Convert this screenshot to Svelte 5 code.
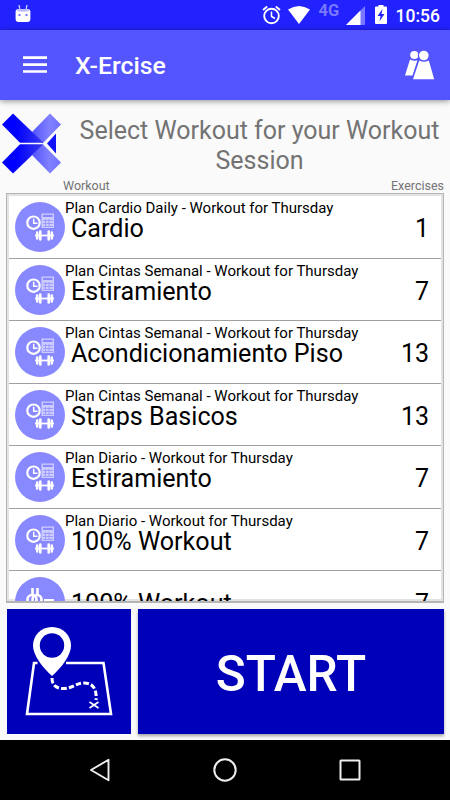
<script>
  let workouts = $state([
    { plan: 'Plan Cardio Daily - Workout for Thursday', name: 'Cardio', exercises: 1 },
    { plan: 'Plan Cintas Semanal - Workout for Thursday', name: 'Estiramiento', exercises: 7 },
    { plan: 'Plan Cintas Semanal - Workout for Thursday', name: 'Acondicionamiento Piso', exercises: 13 },
    { plan: 'Plan Cintas Semanal - Workout for Thursday', name: 'Straps Basicos', exercises: 13 },
    { plan: 'Plan Diario - Workout for Thursday', name: 'Estiramiento', exercises: 7 },
    { plan: 'Plan Diario - Workout for Thursday', name: '100% Workout', exercises: 7 },
    { plan: '', name: '100% Workout', exercises: 7, custom: true }
  ]);
</script>

<div class="screen">
  <div class="status-bar">
    <svg class="droid" width="16" height="18" viewBox="0 0 16 18">
      <path d="M4 0l1 5M12 0l-1 5" stroke="#dcdcff" stroke-width="1.2" />
      <path d="M.6 6.500Q.6 4 3 4h10q2.400 0 2.400 2.500V14q0 3-3 3H3.600q-3 0-3-3z" fill="#fff" />
      <path d="M1.500 5.800Q2 4 4 4h8q2 0 2.500 1.800-6.500 2-13 0z" fill="#bcbcff" />
      <path d="M3.500 9h2v2h-2zM10.500 9h2v2h-2z" fill="#7777ff" />
    </svg>
    <div class="status-icons">
      <svg width="19" height="20" viewBox="0 0 19 20" fill="none" stroke="#fff">
        <circle cx="9.500" cy="11" r="7.300" stroke-width="1.900" />
        <path d="M9.500 6.500v5l3.500 2" stroke-width="1.500" />
        <path d="M1 5l4.200-3.500M18 5l-4.200-3.500" stroke-width="1.900" />
      </svg>
      <svg class="wifi" width="22" height="18" viewBox="0 0 22 18">
        <path d="M0 3.500Q11-3.500 22 3.500L11 18z" fill="#fff" />
      </svg>
      <span class="network">4G</span>
      <svg class="signal" width="19" height="19" viewBox="0 0 19 19">
        <path d="M19 0v19H0z" fill="#7777ff" />
        <path d="M14.500 4.500V19H0z" fill="#fff" />
      </svg>
      <svg class="battery" width="12" height="19" viewBox="0 0 12 19">
        <path d="M0 2.500q0-1 1-1h2.500V0h5v1.500H11q1 0 1 1V18q0 1-1 1H1q-1 0-1-1z" fill="#fff" />
        <path d="M7.500 4L2.500 11H5.500L4.500 16.200 9.500 9H6.500z" fill="#2222ff" />
      </svg>
      <span class="clock">10:56</span>
    </div>
  </div>

  <header class="toolbar">
    <svg class="menu" width="24" height="18" viewBox="0 0 24 18" fill="#fff">
      <path d="M0 .3h24v2.600H0zM0 7.300h24v2.600H0zM0 14.200h24v2.600H0z" />
    </svg>
    <h1>X-Ercise</h1>
    <svg class="people" width="30" height="30" viewBox="0 0 30 30" fill="#fff">
      <circle cx="9.300" cy="5" r="4.100" />
      <path d="M5 9.500q4.500 2 7.500.8L7.500 25.500H0z" />
      <circle cx="18.800" cy="5.500" r="6" fill="#5555ff" />
      <path d="M13.300 9h10.500l6.200 21H6.500z" fill="#5555ff" />
      <circle cx="18.800" cy="5.500" r="4.800" />
      <path d="M14.300 10.500q4.500 2.600 9.500 0L29.200 29.200H8z" />
    </svg>
  </header>

  <main>
    <div class="heading">
      <svg class="logo" width="60" height="62" viewBox="0 0 60 62">
        <defs>
          <linearGradient id="dark" x1="0" x2="1" y1="0" y2="0">
            <stop offset=".35" stop-color="#0000ff" />
            <stop offset="1" stop-color="#3b3bec" />
          </linearGradient>
          <linearGradient id="light" x1="0" x2="1" y1="0" y2="0">
            <stop offset="0" stop-color="#5252ff" />
            <stop offset=".6" stop-color="#8080ff" />
            <stop offset="1" stop-color="#7070ff" />
          </linearGradient>
        </defs>
        <path d="M48 .5L59 11.500 40.500 30.500 30 19z" fill="url(#light)" />
        <path d="M41 31.500L59 49.500 48 60.500 30 42z" fill="url(#light)" />
        <path d="M11 .5L41.500 29.700H18L0 11.500z" fill="url(#dark)" />
        <path d="M18 31.300h23.500L11 60.500 0 49.500z" fill="url(#dark)" />
        <path d="M43 30.500L54 19.500v22z" fill="#fafafa" />
        <path d="M45 30.500L54 20.500v20z" fill="#1010fa" />
      </svg>
      <h2>Select Workout for your Workout Session</h2>
    </div>

    <div class="columns">
      <span>Workout</span>
      <span>Exercises</span>
    </div>

    <div class="list">
      {#each workouts as workout}
        <div class="row">
          <svg class="badge" width="50" height="50" viewBox="0 0 50 50">
            <circle cx="25" cy="25" r="25" fill="#8888ff" />
            {#if workout.custom}
              <g fill="none" stroke="#fff" stroke-width="2.600">
                <path d="M17.500 11v8M22.500 11v8" />
                <circle cx="17" cy="22.500" r="4.500" />
                <circle cx="22" cy="22.500" r="4.500" />
                <path d="M29 23h10" stroke-width="2" />
              </g>
            {:else}
              <circle cx="18.500" cy="20.700" r="6.200" fill="none" stroke="#fff" stroke-width="2.200" />
              <path d="M18.700 16.800v4.400h3.800" fill="none" stroke="#fff" stroke-width="1.500" />
              <path d="M26.500 11.500H39V26H26.500z" fill="#ccccff" />
              <path d="M28 12.800h9.600v2.200H28z" fill="#8888ff" />
              <path d="M28 18.500h10M28 21.500h10M28 24.500h10M30.500 17v8M34 17v8" stroke="#9d9dff" />
              <path d="M20 33.500h19" stroke="#fff" stroke-width="1.800" />
              <path
                d="M22.200 30.500v6M25.300 29.500v8M33.700 29.500v8M36.800 30.500v6"
                stroke="#fff"
                stroke-width="2.600"
                stroke-linecap="round"
              />
            {/if}
          </svg>
          <div class="info">
            <div class="plan">{workout.plan}</div>
            <div class="name">{workout.name}</div>
          </div>
          <div class="count">{workout.exercises}</div>
        </div>
      {/each}
    </div>

    <div class="actions">
      <button class="map" aria-label="Map">
        <svg width="88" height="90" viewBox="0 0 88 90" fill="none" stroke="#fff">
          <path d="M12.500 36H9L2 87h84L78.500 36H41" stroke-width="2.600" />
          <path
            d="M27 0C16 0 8 8.500 8 18.500 8 28 17 40 27 49 37 40 46 28 46 18.500 46 8.500 38 0 27 0z"
            fill="#fff"
            stroke="none"
          />
          <circle cx="27" cy="18.500" r="12.200" fill="#0000b8" stroke="none" />
          <path
            d="M27 51c0 8 5 10.500 11 10.500C48 61.500 51 56 59 56c9 0 13 6 12 17"
            stroke-width="3"
            stroke-dasharray="5.500 2.200"
          />
          <path d="M64.500 75l9 6M73.500 75l-9 6" stroke-width="1.600" />
        </svg>
      </button>
      <button class="start">START</button>
    </div>
  </main>

  <nav>
    <svg width="22" height="24" viewBox="0 0 22 24" fill="none" stroke="#eee" stroke-width="1.900">
      <path d="M19.500 1.800v20.400L2 12z" stroke-linejoin="round" />
    </svg>
    <svg width="24" height="24" viewBox="0 0 24 24" fill="none" stroke="#eee" stroke-width="2">
      <circle cx="12" cy="12" r="10.700" />
    </svg>
    <svg width="22" height="22" viewBox="0 0 22 22" fill="none" stroke="#eee" stroke-width="2">
      <rect x="1.500" y="1.500" width="19" height="19" rx=".5" />
    </svg>
  </nav>
</div>

<style>
  :global(body) {
    margin: 0;
  }

  .screen {
    display: flex;
    flex-direction: column;
    width: 450px;
    height: 800px;
    overflow: hidden;
    background: #fafafa;
    font-family: Roboto, sans-serif;
  }

  svg {
    display: block;
    flex-shrink: 0;
  }

  .status-bar {
    display: flex;
    justify-content: space-between;
    height: 30px;
    padding: 0 10px 0 15px;
    background: #2222ff;
    color: #fff;
  }

  .droid {
    margin-top: 5px;
  }

  .status-icons {
    display: flex;
    align-items: flex-start;
    padding-top: 5px;
  }

  .wifi {
    margin: 1px 9px 0 7px;
  }

  .network {
    width: 23px;
    margin-top: -3px;
    color: #7777ff;
    font-size: 16.5px;
    font-weight: 700;
    line-height: 18px;
  }

  .signal {
    margin: 1px 10px 0 4px;
  }

  .battery {
    margin-right: 9px;
  }

  .clock {
    font-size: 17.5px;
    font-weight: 500;
    line-height: 22px;
  }

  .toolbar {
    display: flex;
    align-items: center;
    height: 70px;
    flex-shrink: 0;
    padding: 0 15px 0 23px;
    background: #5555ff;
    box-shadow: 0 1px 6px rgba(0, 0, 0, 0.45);
    color: #fff;
  }

  h1 {
    flex: 1;
    margin: 2px 0 0 28px;
    font-size: 24.8px;
    font-weight: 500;
    line-height: 30px;
  }

  main {
    display: flex;
    flex-direction: column;
    height: 640px;
  }

  .heading {
    display: flex;
    padding: 13px 6px 0 2px;
    height: 64px;
  }

  h2 {
    flex: 1;
    margin: 3px 0 0 13px;
    color: #737373;
    font-size: 25px;
    font-weight: 400;
    line-height: 30px;
    text-align: center;
  }

  .columns {
    display: flex;
    justify-content: space-between;
    height: 16px;
    padding: 0 6px 0 63px;
    color: #737373;
    font-size: 12.5px;
    line-height: 17px;
  }

  .list {
    box-sizing: border-box;
    height: 410px;
    margin: 0 6px;
    border: 1px solid #b5b5b5;
    border-bottom-width: 2px;
    box-shadow: inset 0 0 0 2px #e3e3e3;
    background: #fff;
    padding: 2px 2px 0;
    overflow: hidden;
  }

  .row {
    box-sizing: border-box;
    display: flex;
    height: 62.5px;
    padding: 6px 12px 0 6px;
    border-bottom: 1px solid #a0a0a0;
    color: #000;
  }

  .info {
    flex: 1;
    white-space: nowrap;
  }

  .plan {
    height: 18px;
    margin-top: -3px;
    font-size: 15px;
    line-height: 18px;
  }

  .name {
    padding-left: 6px;
    font-size: 25.1px;
    line-height: 24px;
  }

  .count {
    padding-top: 12px;
    font-size: 25px;
    line-height: 30px;
  }

  .actions {
    display: flex;
    gap: 7px;
    padding: 6px 6px 0 7px;
  }

  button {
    height: 125px;
    padding: 0;
    border: 0;
    background: #0000b8;
    color: #fff;
    box-shadow: 0 2px 3px rgba(0, 0, 0, 0.35);
  }

  .map {
    width: 124px;
    padding: 0 0 0 18px;
    box-shadow: none;
  }

  .start {
    flex: 1;
    font-family: Roboto, sans-serif;
    font-size: 49.5px;
    font-weight: 500;
    padding-top: 4px;
  }

  nav {
    display: flex;
    align-items: center;
    justify-content: space-between;
    height: 60px;
    padding: 0 89px;
    background: #000;
  }
</style>
